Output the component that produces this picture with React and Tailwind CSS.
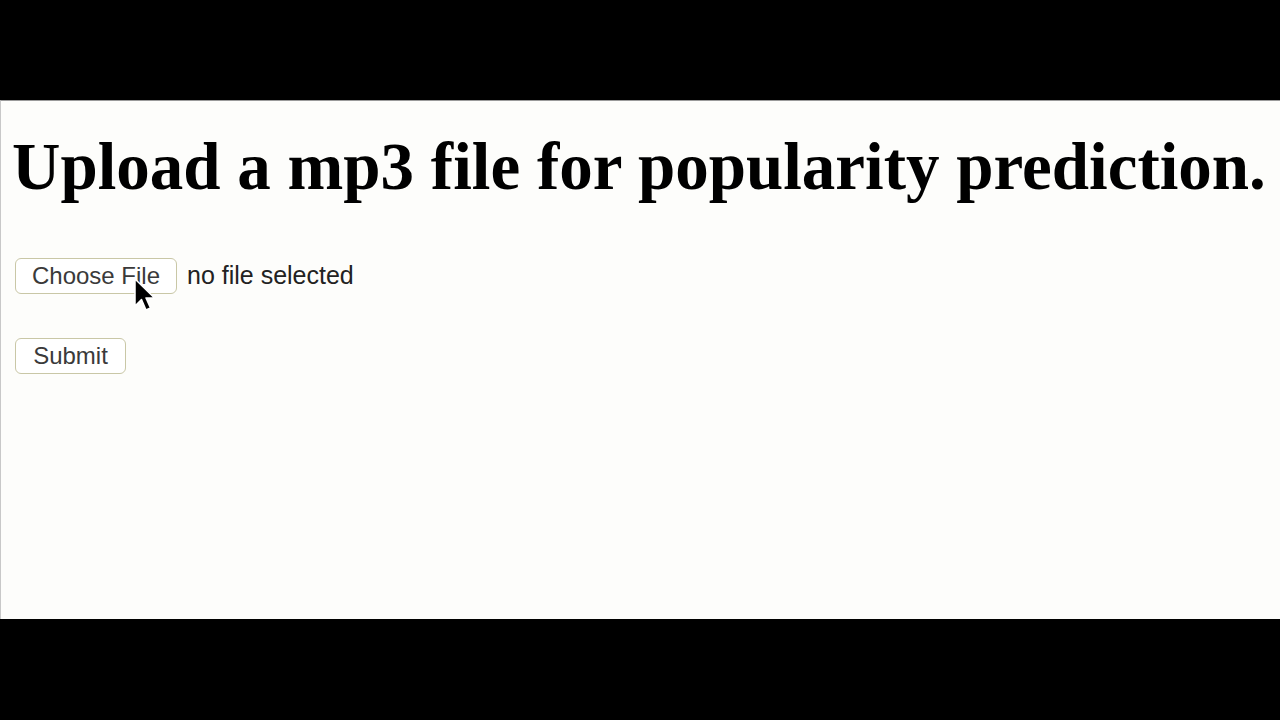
export default function App() {
  return (
    <div className="w-[1280px] h-[720px] bg-black flex flex-col">
      <div className="h-[100px] shrink-0" />
      <div className="h-[519px] shrink-0 bg-[#fdfdfb] border-t border-[#9a9a9a] border-l border-l-[#c8c8c8] relative">
        <h1 className="pl-[11px] pt-[25px] text-[67px] leading-[80px] font-bold text-black font-['Liberation_Serif',serif] whitespace-nowrap">
          Upload a mp3 file for popularity prediction.
        </h1>
        <div className="pl-[14px] pt-[51px] flex items-center gap-[10px] font-['Liberation_Sans',Arial,sans-serif] text-[#222]">
          <button className="h-[36px] w-[162px] rounded-[6px] border border-[#c9c7a6] bg-white text-[24px] text-[#3a3a3a] flex items-center justify-center">
            Choose File
          </button>
          <span className="text-[25px]">no file selected</span>
        </div>
        <div className="pl-[14px] pt-[43px] font-['Liberation_Sans',Arial,sans-serif] text-[24px]">
          <button className="h-[36px] w-[111px] rounded-[6px] border border-[#c9c7a6] bg-white text-[#3a3a3a] flex items-center justify-center">
            Submit
          </button>
        </div>
        <svg className="absolute left-[132px] top-[177px]" width="24" height="38" viewBox="0 0 24 38">
          <path d="M2 1 L2 28 L8.5 21.5 L13 32 L17.5 30 L13 20 L21.5 20 Z" fill="#000" stroke="#fff" strokeWidth="1.5" strokeLinejoin="round" />
        </svg>
      </div>
    </div>
  );
}
